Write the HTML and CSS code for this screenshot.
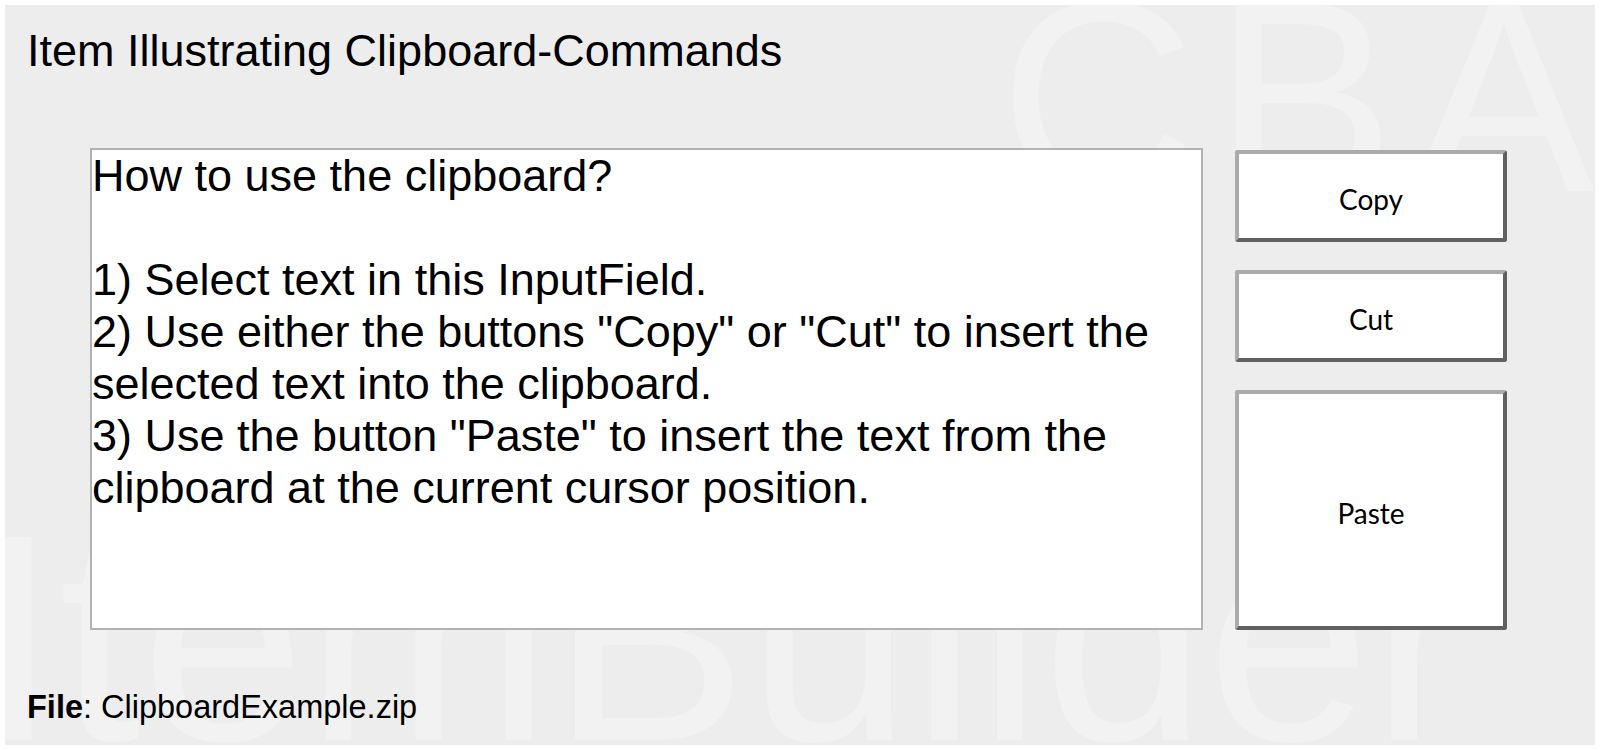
FILE: index.html
```html
<!DOCTYPE html>
<html lang="en">
<head>
<meta charset="utf-8">
<title>Item Illustrating Clipboard-Commands</title>
<link rel="stylesheet" href="styles.css">
</head>
<body>
<div class="panel">
  <div class="watermark watermark-cba" aria-hidden="true">CBA</div>
  <div class="watermark watermark-ib" aria-hidden="true">ItemBuilder</div>
  <div class="content">
    <h1 class="title">Item Illustrating Clipboard-Commands</h1>
    <div class="workspace">
      <div class="input-field">How to use the clipboard?

1) Select text in this InputField.
2) Use either the buttons "Copy" or "Cut" to insert the selected text into the clipboard.
3) Use the button "Paste" to insert the text from the clipboard at the current cursor position.</div>
      <div class="buttons">
        <button class="btn btn-small">Copy</button>
        <button class="btn btn-small">Cut</button>
        <button class="btn btn-large">Paste</button>
      </div>
    </div>
    <p class="file"><b>File</b>: ClipboardExample.zip</p>
  </div>
</div>
</body>
</html>
```
FILE: styles.css
```css
html, body {
  margin: 0;
  padding: 0;
  background: #ffffff;
}
body {
  width: 1600px;
  height: 750px;
  overflow: hidden;
  font-family: "Liberation Sans", Arial, sans-serif;
  color: #000;
}
.panel {
  position: relative;
  margin: 5px;
  width: 1590px;
  height: 740px;
  background: #ededed;
  overflow: hidden;
}
.watermark {
  position: absolute;
  font-family: "Liberation Sans", Arial, sans-serif;
  line-height: 1;
  color: #f2f2f2;
  white-space: nowrap;
  pointer-events: none;
  z-index: 0;
}
.watermark-cba {
  font-size: 272px;
  letter-spacing: 18px;
  left: 994px;
  top: -44px;
}
.watermark-ib {
  font-size: 295px;
  left: -28px;
  top: 486px;
}
.content {
  position: relative;
  z-index: 1;
  display: flex;
  flex-direction: column;
  padding: 20px 0 0 22px;
}
.title {
  margin: 0;
  font-size: 45px;
  font-weight: normal;
  line-height: 52px;
}
.workspace {
  display: flex;
  align-items: flex-start;
  gap: 32px;
  margin: 71px 0 0 63px;
}
.input-field {
  box-sizing: border-box;
  width: 1113px;
  height: 482px;
  border: 2px solid #b2b2b2;
  background: #fff;
  font-size: 45px;
  line-height: 52px;
  white-space: pre-wrap;
  padding: 0;
  overflow: hidden;
}
.buttons {
  display: flex;
  flex-direction: column;
  gap: 28px;
  margin-top: 2px;
}
.btn {
  box-sizing: border-box;
  width: 272px;
  background: #fff;
  border-style: solid;
  border-width: 4px;
  border-color: #ababab #606060 #606060 #ababab;
  border-radius: 3px;
  font-family: Lato, "Open Sans", sans-serif;
  font-size: 28px;
  color: #000;
  padding: 6px 0 0 0;
}
.btn-small {
  height: 92px;
}
.btn-large {
  height: 240px;
}
.file {
  margin: 59px 0 0 0;
  font-size: 32.5px;
  line-height: 37px;
}
.file b {
  font-weight: bold;
}
```
